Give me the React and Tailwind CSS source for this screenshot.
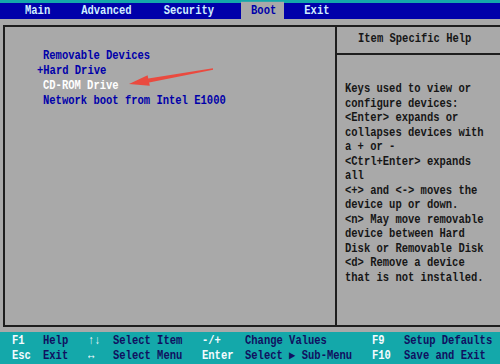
import React from "react";

const tabs = [
  { label: "Main", ml: "ml-[25px]" },
  { label: "Advanced", ml: "ml-[31px]" },
  { label: "Security", ml: "ml-[32px]" },
  { label: "Boot", ml: "ml-[27px]", active: true },
  { label: "Exit", ml: "ml-[20px]" },
];

const help = [
  "Keys used to view or",
  "configure devices:",
  "<Enter> expands or",
  "collapses devices with",
  "a + or -",
  "<Ctrl+Enter> expands",
  "all",
  "<+> and <-> moves the",
  "device up or down.",
  "<n> May move removable",
  "device between Hard",
  "Disk or Removable Disk",
  "<d> Remove a device",
  "that is not installed.",
];

const footer = [
  ["F1", "Help", "↑↓", "Select Item", "-/+", "Change Values", "F9", "Setup Defaults"],
  ["Esc", "Exit", "↔", "Select Menu", "Enter", "Select ▶ Sub-Menu", "F10", "Save and Exit"],
];

export default function App() {
  return (
    <div className="relative w-[500px] h-[364px] overflow-hidden bg-[#a9a9a9] flex flex-col font-['Liberation_Mono',monospace] font-bold text-[10.5px]">
      <div className="h-[3px] bg-[#14a8aa]" />
      <div className="h-[16px] bg-[#0000aa] flex items-stretch text-[#cfeeff] leading-[16px]">
        {tabs.map(t => (
          <span
            key={t.label}
            className={`${t.ml} inline-block scale-y-[1.15] ${t.active ? "bg-[#a9a9a9] text-[#0000aa] pl-[10px] pr-[8px]" : ""}`}
          >
            {t.label}
          </span>
        ))}
      </div>
      <div className="h-[6px]" />

      <div className="ml-[3px] h-[302px] border-t-2 border-l-2 border-b-2 border-[#1e1e1e] flex">
        <div className="w-[332px] border-r-2 border-[#1e1e1e] pt-[22px] leading-[15px] text-[#0000aa]">
          <div className="pl-[38px] scale-y-[1.15]">Removable Devices</div>
          <div className="pl-[32px] scale-y-[1.15]">+Hard Drive</div>
          <div className="pl-[38px] scale-y-[1.15] text-white">CD-ROM Drive</div>
          <div className="pl-[38px] scale-y-[1.15]">Network boot from Intel E1000</div>
        </div>
        <div className="flex-1 flex flex-col text-[#161616]">
          <div className="h-[28px] border-b-2 border-[#1e1e1e] flex items-center pl-[21px]">
            <span className="inline-block scale-y-[1.15]">Item Specific Help</span>
          </div>
          <div className="pl-[8px] pt-[27px] leading-[14.5px]">
            {help.map((l, i) => (
              <div key={i} className="whitespace-pre scale-y-[1.15]">{l}</div>
            ))}
          </div>
        </div>
      </div>

      <div className="h-[5px]" />
      <div className="flex-1 bg-[#14a8aa] pl-[12px] pt-[2px] leading-[15px]">
        {footer.map((row, r) => (
          <div key={r} className="grid grid-cols-[31px_45px_25px_89px_43px_127px_32px_1fr]">
            {row.map((c, i) => (
              <span key={i} className={`scale-y-[1.15] ${i % 2 === 0 ? "text-[#f4fbff]" : "text-[#101060]"}`}>{c}</span>
            ))}
          </div>
        ))}
      </div>

      <svg className="absolute left-0 top-0 pointer-events-none" width="500" height="364">
        <polygon
          fill="#ea4a3f"
          points="212.9,68.3 148.3,78.4 147.6,75.2 129,84 149.8,85.8 149.1,82.6 213.1,69.7"
        />
      </svg>
    </div>
  );
}
